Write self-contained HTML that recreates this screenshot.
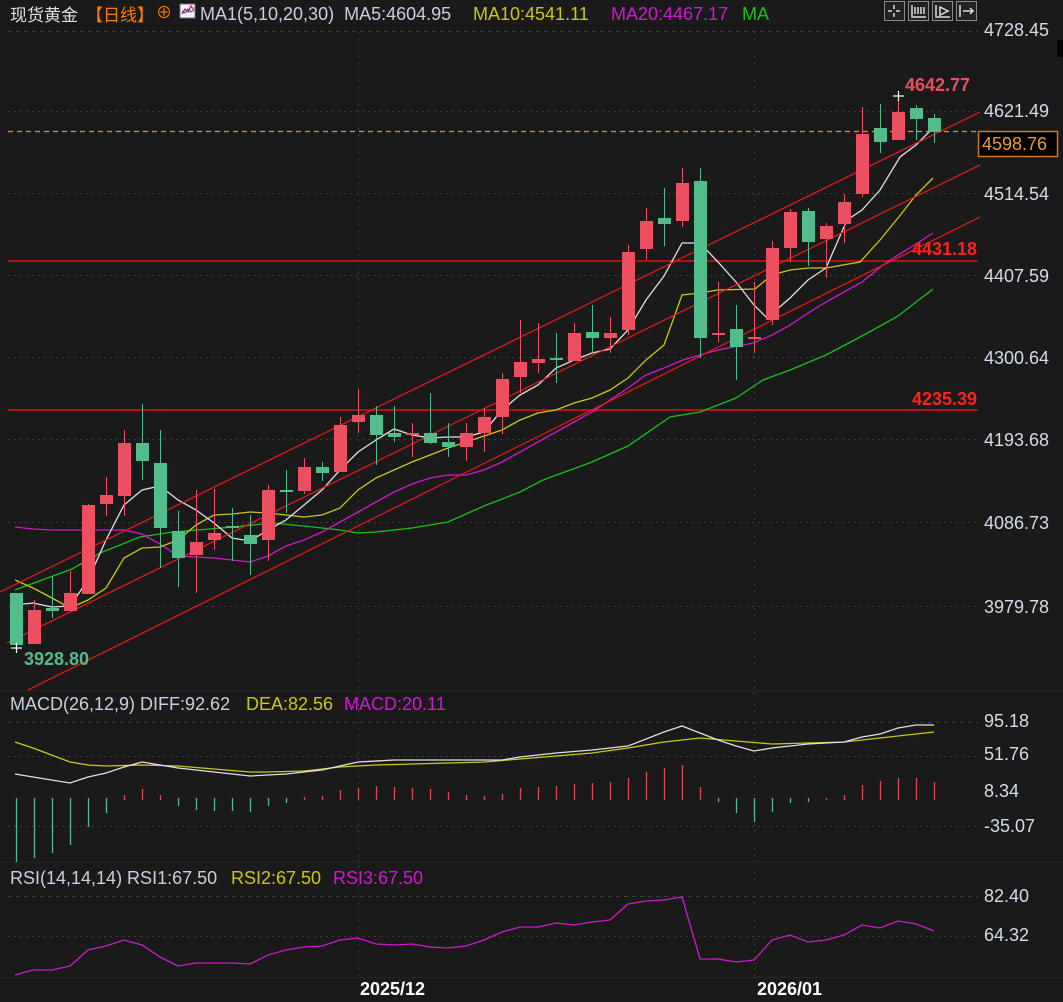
<!DOCTYPE html>
<html><head><meta charset="utf-8"><style>
html,body{margin:0;padding:0;background:#1a1a1a;}
body{width:1063px;height:1002px;overflow:hidden;position:relative;font-family:"Liberation Sans","Noto Sans CJK SC",sans-serif;}
svg{position:absolute;left:0;top:0;}
.t{position:absolute;white-space:nowrap;font-size:18px;line-height:18px;}
.ax{position:absolute;left:984px;font-size:18px;color:#d4dbe8;line-height:18px;}
</style></head><body>
<svg width="1063" height="1002" viewBox="0 0 1063 1002">
<rect width="1063" height="1002" fill="#1a1a1a"/>
<g stroke="#3c3c3c" stroke-width="1" stroke-dasharray="2,4" fill="none">
<line x1="8" y1="31.5" x2="978" y2="31.5" stroke-dasharray="4,4"/>
<line x1="8" y1="111.5" x2="978" y2="111.5"/>
<line x1="8" y1="193.5" x2="978" y2="193.5"/>
<line x1="8" y1="275.5" x2="978" y2="275.5"/>
<line x1="8" y1="357.5" x2="978" y2="357.5"/>
<line x1="8" y1="439.5" x2="978" y2="439.5"/>
<line x1="8" y1="522.5" x2="978" y2="522.5"/>
<line x1="8" y1="606.5" x2="978" y2="606.5"/>
<line x1="8" y1="722.5" x2="978" y2="722.5" stroke-dasharray="4,4"/>
<line x1="8" y1="756.5" x2="978" y2="756.5"/>
<line x1="8" y1="826.5" x2="978" y2="826.5"/>
<line x1="8" y1="896.5" x2="978" y2="896.5" stroke-dasharray="4,4"/>
<line x1="8" y1="936.5" x2="978" y2="936.5"/>
<line x1="358.5" y1="32" x2="358.5" y2="977"/>
<line x1="754.5" y1="32" x2="754.5" y2="977"/>
</g>
<g stroke="#262626"><line x1="0" y1="690.5" x2="1063" y2="690.5"/><line x1="0" y1="862.5" x2="1063" y2="862.5"/><line x1="0" y1="977.5" x2="1063" y2="977.5"/></g>
<rect x="1057" y="40" width="6" height="17" fill="#050505"/>
<line x1="8" y1="261" x2="978" y2="261" stroke="#e01010" stroke-width="1.5"/>
<line x1="8" y1="410" x2="978" y2="410" stroke="#e01010" stroke-width="1.5"/>
<line x1="8" y1="131.5" x2="978" y2="131.5" stroke="#e8902a" stroke-width="1.3" stroke-dasharray="5,4"/>
<polyline fill="none" stroke="#18c018" stroke-width="1.3" points="15,590 72,569 100,553 140,537 173,532 233,527 273,523 313,527 340,530 358,533 376,532 412,528 448,522 484,506 520,492 543,480 592,462 628,446 670,417 700,412 736,398 763,380 790,370 826,355 862,336 898,316 933,289"/>
<polyline fill="none" stroke="#d018d0" stroke-width="1.3" points="15,527 33,529 52,530 124,530 142,534 160,544 178,556 214,558 250,562 268,556 286,546 304,540 322,532 340,522 358,512 376,502 394,492 412,484 430,478 448,475 466,475 484,470 502,462 520,452 538,442 556,432 574,422 592,412 610,400 628,388 646,375 664,368 683,360 700,355 718,350 753,343 772,335 787,327 808,313 826,302 844,292 862,282 883,265 898,255 916,244 933,233"/>
<polyline fill="none" stroke="#c8c818" stroke-width="1.3" points="15,580 33,588 52,598 70,608 88,600 106,588 124,558 142,548 160,547 178,540 196,525 214,515 232,514 250,512 268,513 286,515 304,517 322,515 340,508 358,490 376,478 394,470 412,462 430,455 448,448 466,442 484,436 502,430 520,420 538,413 556,410 574,403 592,398 610,390 628,378 646,360 664,345 682,295 700,293 718,290 755,289 772,275 790,270 808,268 826,268 860,262 880,240 898,218 916,195 933,178"/>
<polyline fill="none" stroke="#e0e0e0" stroke-width="1.3" points="15,605 33,603 52,607 70,606 88,580 106,540 124,505 142,490 160,486 178,500 196,510 214,523 232,538 250,541 268,530 286,520 304,505 322,490 340,470 358,452 376,440 394,429 412,435 430,438 448,437 466,437 484,432 502,410 520,395 538,385 556,368 574,360 592,353 610,349 628,330 646,300 664,276 682,243 700,243 718,262 736,282 754,305 767,318 790,298 808,280 826,268 847,220 862,210 880,190 900,157 916,145 933,128"/>
<g stroke="#f01818" stroke-width="1.2">
<line x1="0" y1="592" x2="980" y2="112"/>
<line x1="7" y1="643" x2="980" y2="165"/>
<line x1="28" y1="690" x2="980" y2="217"/>
</g>
<g stroke-width="1">
<g fill="#52bd8a" stroke="#52bd8a">
<line x1="16.5" y1="593" x2="16.5" y2="648"/><rect x="10" y="593" width="13" height="52" stroke="none"/>
<line x1="52.5" y1="576" x2="52.5" y2="618"/><rect x="46" y="608" width="13" height="3" stroke="none"/>
<line x1="142.5" y1="404" x2="142.5" y2="480"/><rect x="136" y="443" width="13" height="18" stroke="none"/>
<line x1="160.5" y1="430" x2="160.5" y2="568"/><rect x="154" y="463" width="13" height="65" stroke="none"/>
<line x1="178.5" y1="511" x2="178.5" y2="587"/><rect x="172" y="531" width="13" height="27" stroke="none"/>
<line x1="232.5" y1="508" x2="232.5" y2="561"/><rect x="226" y="526" width="13" height="2" stroke="none"/>
<line x1="250.5" y1="515" x2="250.5" y2="575"/><rect x="244" y="535" width="13" height="9" stroke="none"/>
<line x1="286.5" y1="470" x2="286.5" y2="513"/><rect x="280" y="490" width="13" height="2" stroke="none"/>
<line x1="322.5" y1="462" x2="322.5" y2="481"/><rect x="316" y="467" width="13" height="6" stroke="none"/>
<line x1="376.5" y1="406" x2="376.5" y2="465"/><rect x="370" y="415" width="13" height="20" stroke="none"/>
<line x1="394.5" y1="406" x2="394.5" y2="442"/><rect x="388" y="433" width="13" height="4" stroke="none"/>
<line x1="430.5" y1="393" x2="430.5" y2="444"/><rect x="424" y="433" width="13" height="10" stroke="none"/>
<line x1="448.5" y1="423" x2="448.5" y2="457"/><rect x="442" y="442" width="13" height="5" stroke="none"/>
<line x1="556.5" y1="333" x2="556.5" y2="383"/><rect x="550" y="358" width="13" height="2" stroke="none"/>
<line x1="592.5" y1="305" x2="592.5" y2="353"/><rect x="586" y="332" width="13" height="6" stroke="none"/>
<line x1="664.5" y1="188" x2="664.5" y2="246"/><rect x="658" y="218" width="13" height="6" stroke="none"/>
<line x1="700.5" y1="168" x2="700.5" y2="358"/><rect x="694" y="181" width="13" height="157" stroke="none"/>
<line x1="736.5" y1="305" x2="736.5" y2="380"/><rect x="730" y="329" width="13" height="18" stroke="none"/>
<line x1="808.5" y1="208" x2="808.5" y2="266"/><rect x="802" y="211" width="13" height="31" stroke="none"/>
<line x1="880.5" y1="104" x2="880.5" y2="153"/><rect x="874" y="128" width="13" height="14" stroke="none"/>
<line x1="916.5" y1="105" x2="916.5" y2="140"/><rect x="910" y="108" width="13" height="11" stroke="none"/>
<line x1="934.5" y1="114" x2="934.5" y2="143"/><rect x="928" y="118" width="13" height="14" stroke="none"/>
</g>
<g fill="#ec5060" stroke="#ec5060">
<line x1="34.5" y1="600" x2="34.5" y2="644"/><rect x="28" y="610" width="13" height="34" stroke="none"/>
<line x1="70.5" y1="571" x2="70.5" y2="611"/><rect x="64" y="593" width="13" height="18" stroke="none"/>
<line x1="88.5" y1="504" x2="88.5" y2="594"/><rect x="82" y="505" width="13" height="89" stroke="none"/>
<line x1="106.5" y1="477" x2="106.5" y2="516"/><rect x="100" y="495" width="13" height="9" stroke="none"/>
<line x1="124.5" y1="430" x2="124.5" y2="516"/><rect x="118" y="443" width="13" height="53" stroke="none"/>
<line x1="196.5" y1="490" x2="196.5" y2="593"/><rect x="190" y="542" width="13" height="13" stroke="none"/>
<line x1="214.5" y1="489" x2="214.5" y2="550"/><rect x="208" y="533" width="13" height="7" stroke="none"/>
<line x1="268.5" y1="485" x2="268.5" y2="561"/><rect x="262" y="490" width="13" height="50" stroke="none"/>
<line x1="304.5" y1="458" x2="304.5" y2="494"/><rect x="298" y="467" width="13" height="24" stroke="none"/>
<line x1="340.5" y1="417" x2="340.5" y2="472"/><rect x="334" y="425" width="13" height="47" stroke="none"/>
<line x1="358.5" y1="389" x2="358.5" y2="433"/><rect x="352" y="415" width="13" height="7" stroke="none"/>
<line x1="412.5" y1="423" x2="412.5" y2="457"/><rect x="406" y="433" width="13" height="2" stroke="none"/>
<line x1="466.5" y1="423" x2="466.5" y2="461"/><rect x="460" y="433" width="13" height="14" stroke="none"/>
<line x1="484.5" y1="408" x2="484.5" y2="452"/><rect x="478" y="417" width="13" height="16" stroke="none"/>
<line x1="502.5" y1="373" x2="502.5" y2="434"/><rect x="496" y="379" width="13" height="38" stroke="none"/>
<line x1="520.5" y1="320" x2="520.5" y2="393"/><rect x="514" y="362" width="13" height="15" stroke="none"/>
<line x1="538.5" y1="323" x2="538.5" y2="373"/><rect x="532" y="359" width="13" height="4" stroke="none"/>
<line x1="574.5" y1="323" x2="574.5" y2="361"/><rect x="568" y="333" width="13" height="28" stroke="none"/>
<line x1="610.5" y1="317" x2="610.5" y2="353"/><rect x="604" y="333" width="13" height="5" stroke="none"/>
<line x1="628.5" y1="245" x2="628.5" y2="335"/><rect x="622" y="252" width="13" height="78" stroke="none"/>
<line x1="646.5" y1="208" x2="646.5" y2="260"/><rect x="640" y="221" width="13" height="28" stroke="none"/>
<line x1="682.5" y1="168" x2="682.5" y2="227"/><rect x="676" y="183" width="13" height="38" stroke="none"/>
<line x1="718.5" y1="282" x2="718.5" y2="342"/><rect x="712" y="333" width="13" height="2" stroke="none"/>
<line x1="754.5" y1="282" x2="754.5" y2="353"/><rect x="748" y="337" width="13" height="2" stroke="none"/>
<line x1="772.5" y1="241" x2="772.5" y2="325"/><rect x="766" y="248" width="13" height="72" stroke="none"/>
<line x1="790.5" y1="209" x2="790.5" y2="262"/><rect x="784" y="212" width="13" height="36" stroke="none"/>
<line x1="826.5" y1="223" x2="826.5" y2="278"/><rect x="820" y="226" width="13" height="13" stroke="none"/>
<line x1="844.5" y1="194" x2="844.5" y2="243"/><rect x="838" y="202" width="13" height="22" stroke="none"/>
<line x1="862.5" y1="107" x2="862.5" y2="197"/><rect x="856" y="134" width="13" height="60" stroke="none"/>
<line x1="898.5" y1="95" x2="898.5" y2="140"/><rect x="892" y="112" width="13" height="28" stroke="none"/>
</g>
<g stroke="#ffffff" stroke-width="1.2"><line x1="893" y1="96" x2="904" y2="96"/><line x1="898.5" y1="91" x2="898.5" y2="101"/><line x1="11" y1="648" x2="22" y2="648"/><line x1="16.5" y1="643" x2="16.5" y2="653"/></g>
</g>
<g stroke-width="1.3">
<g stroke="#52bd8a">
<line x1="16.5" y1="798" x2="16.5" y2="862"/><line x1="34.5" y1="798" x2="34.5" y2="858"/><line x1="52.5" y1="798" x2="52.5" y2="853"/><line x1="70.5" y1="798" x2="70.5" y2="845"/><line x1="88.5" y1="798" x2="88.5" y2="827"/><line x1="106.5" y1="798" x2="106.5" y2="813"/>
<line x1="178.5" y1="798" x2="178.5" y2="806"/><line x1="196.5" y1="798" x2="196.5" y2="810"/><line x1="214.5" y1="798" x2="214.5" y2="811"/><line x1="232.5" y1="798" x2="232.5" y2="811"/><line x1="250.5" y1="798" x2="250.5" y2="812"/><line x1="268.5" y1="798" x2="268.5" y2="806"/><line x1="286.5" y1="798" x2="286.5" y2="803"/>
<line x1="718.5" y1="798" x2="718.5" y2="802"/><line x1="736.5" y1="798" x2="736.5" y2="813"/><line x1="754.5" y1="798" x2="754.5" y2="822"/><line x1="772.5" y1="798" x2="772.5" y2="812"/><line x1="790.5" y1="798" x2="790.5" y2="803"/><line x1="808.5" y1="798" x2="808.5" y2="802"/>
</g>
<g stroke="#e04858">
<line x1="124.5" y1="795" x2="124.5" y2="800"/><line x1="142.5" y1="789" x2="142.5" y2="800"/><line x1="160.5" y1="795" x2="160.5" y2="800"/>
<line x1="304.5" y1="797" x2="304.5" y2="800"/><line x1="322.5" y1="796" x2="322.5" y2="800"/><line x1="340.5" y1="790" x2="340.5" y2="800"/><line x1="358.5" y1="788" x2="358.5" y2="800"/><line x1="376.5" y1="786" x2="376.5" y2="800"/><line x1="394.5" y1="787" x2="394.5" y2="800"/><line x1="412.5" y1="788" x2="412.5" y2="800"/><line x1="430.5" y1="789" x2="430.5" y2="800"/><line x1="448.5" y1="792" x2="448.5" y2="800"/><line x1="466.5" y1="795" x2="466.5" y2="800"/><line x1="484.5" y1="796" x2="484.5" y2="800"/><line x1="502.5" y1="794" x2="502.5" y2="800"/><line x1="520.5" y1="788" x2="520.5" y2="800"/><line x1="538.5" y1="787" x2="538.5" y2="800"/><line x1="556.5" y1="786" x2="556.5" y2="800"/><line x1="574.5" y1="784" x2="574.5" y2="800"/><line x1="592.5" y1="783" x2="592.5" y2="800"/><line x1="610.5" y1="782" x2="610.5" y2="800"/><line x1="628.5" y1="778" x2="628.5" y2="800"/><line x1="646.5" y1="772" x2="646.5" y2="800"/><line x1="664.5" y1="768" x2="664.5" y2="800"/><line x1="682.5" y1="765" x2="682.5" y2="800"/><line x1="700.5" y1="787" x2="700.5" y2="800"/>
<line x1="826.5" y1="798" x2="826.5" y2="800"/><line x1="844.5" y1="795" x2="844.5" y2="800"/><line x1="862.5" y1="785" x2="862.5" y2="800"/><line x1="880.5" y1="781" x2="880.5" y2="800"/><line x1="898.5" y1="778" x2="898.5" y2="800"/><line x1="916.5" y1="778" x2="916.5" y2="800"/><line x1="934.5" y1="782" x2="934.5" y2="800"/>
</g>
</g>
<polyline fill="none" stroke="#c8c818" stroke-width="1.3" points="15,742 33,748 70,762 88,765 106,766 142,765 178,766 214,769 250,772 268,772 304,771 340,767 376,765 412,764 448,763 484,762 520,759 556,756 592,753 628,748 664,742 700,738 736,741 772,744 808,743 844,742 880,738 934,732"/>
<polyline fill="none" stroke="#e0e0e0" stroke-width="1.3" points="15,774 33,777 70,783 88,777 106,773 124,767 142,762 160,765 178,768 214,772 250,776 286,774 322,770 358,762 394,760 430,760 466,760 502,760 520,757 556,753 592,750 628,746 664,732 682,726 700,733 718,740 736,746 754,751 772,748 808,744 844,742 862,737 880,734 898,728 916,725 934,725"/>
<polyline fill="none" stroke="#d018d0" stroke-width="1.3" points="15,975 33,970 52,970 70,966 88,950 106,946 124,940 142,945 160,957 178,966 196,963 214,963 232,963 250,964 268,955 286,950 304,947 322,946 340,940 358,938 376,944 394,945 412,944 430,947 448,948 466,946 484,940 502,932 520,927 538,927 556,923 574,925 592,922 610,920 628,904 646,901 664,900 682,897 700,959 718,959 736,962 754,960 772,940 790,935 808,942 826,940 844,935 862,925 880,928 898,921 916,924 934,931"/>
<g fill="none" stroke="#8a8a8a" stroke-width="1">
<rect x="884.5" y="1.5" width="20" height="19" fill="#222"/><rect x="908.5" y="1.5" width="20" height="19" fill="#222"/><rect x="932.5" y="1.5" width="20" height="19" fill="#222"/><rect x="956.5" y="1.5" width="20" height="19" fill="#222"/>
<g stroke="#ddd" stroke-width="1.5"><path d="M888 11h4M896 11h4M894 5v4M894 13v4"/><path d="M912 5v12h14M915 7v7M918 7v7M921 7v7M924 7v7"/><path d="M936 5v12h14M940 7l8 4l-8 4z"/><path d="M960 5v12M963 11h10M970 8l3 3l-3 3"/></g>
</g>
<rect x="978.5" y="131.5" width="79" height="25" fill="#000" stroke="#c87a20" stroke-width="1.5"/>
<rect x="180" y="4" width="15" height="14" fill="#f4f4f4" stroke="#6070a0"/>
<path d="M182 14l3-5l3 3l3-6l3 4" stroke="#e02020" fill="none" stroke-width="1.3"/>
<path d="M182 11l3 2l3-4l3 3l3-2" stroke="#2040e0" fill="none" stroke-width="1"/>
</svg>

<div class="t" style="left:10px;top:3px;color:#e0e0e0;font-family:'Noto Sans CJK SC',sans-serif;font-size:17px;line-height:22px;">现货黄金</div>
<div class="t" style="left:86px;top:3px;color:#ff7a00;font-family:'Noto Sans CJK SC',sans-serif;font-size:17px;line-height:22px;">【日线】</div>
<div class="t" style="left:156px;top:5px;color:#ff7a00;font-size:16px;">⊕</div>
<div class="t" style="left:200px;top:5px;color:#c8d0e0;">MA1(5,10,20,30)&nbsp; MA5:4604.95</div>
<div class="t" style="left:473px;top:5px;color:#c8c818;">MA10:4541.11</div>
<div class="t" style="left:611px;top:5px;color:#d018d0;">MA20:4467.17</div>
<div class="t" style="left:742px;top:5px;color:#18c018;">MA</div>

<div class="ax" style="top:21px;">4728.45</div>
<div class="ax" style="top:102px;">4621.49</div>
<div class="ax" style="top:185px;">4514.54</div>
<div class="ax" style="top:267px;">4407.59</div>
<div class="ax" style="top:349px;">4300.64</div>
<div class="ax" style="top:431px;">4193.68</div>
<div class="ax" style="top:514px;">4086.73</div>
<div class="ax" style="top:598px;">3979.78</div>
<div class="ax" style="top:135px;left:982px;color:#e89a38;">4598.76</div>

<div class="t" style="left:905px;top:76px;color:#e85060;font-weight:bold;">4642.77</div>
<div class="t" style="left:912px;top:240px;color:#ff2020;font-weight:bold;">4431.18</div>
<div class="t" style="left:912px;top:390px;color:#ff2020;font-weight:bold;">4235.39</div>
<div class="t" style="left:24px;top:650px;color:#52bd8a;font-weight:bold;">3928.80</div>

<div class="t" style="left:10px;top:695px;color:#c8d0e0;">MACD(26,12,9) DIFF:92.62</div>
<div class="t" style="left:246px;top:695px;color:#c8c818;">DEA:82.56</div>
<div class="t" style="left:344px;top:695px;color:#d018d0;">MACD:20.11</div>
<div class="ax" style="top:712px;">95.18</div>
<div class="ax" style="top:745px;">51.76</div>
<div class="ax" style="top:782px;">8.34</div>
<div class="ax" style="top:817px;">-35.07</div>

<div class="t" style="left:10px;top:869px;color:#c8d0e0;">RSI(14,14,14) RSI1:67.50</div>
<div class="t" style="left:231px;top:869px;color:#c8c818;">RSI2:67.50</div>
<div class="t" style="left:333px;top:869px;color:#d018d0;">RSI3:67.50</div>
<div class="ax" style="top:887px;">82.40</div>
<div class="ax" style="top:926px;">64.32</div>

<div class="t" style="left:360px;top:980px;color:#ffffff;font-weight:bold;">2025/12</div>
<div class="t" style="left:757px;top:980px;color:#ffffff;font-weight:bold;">2026/01</div>
</body></html>
